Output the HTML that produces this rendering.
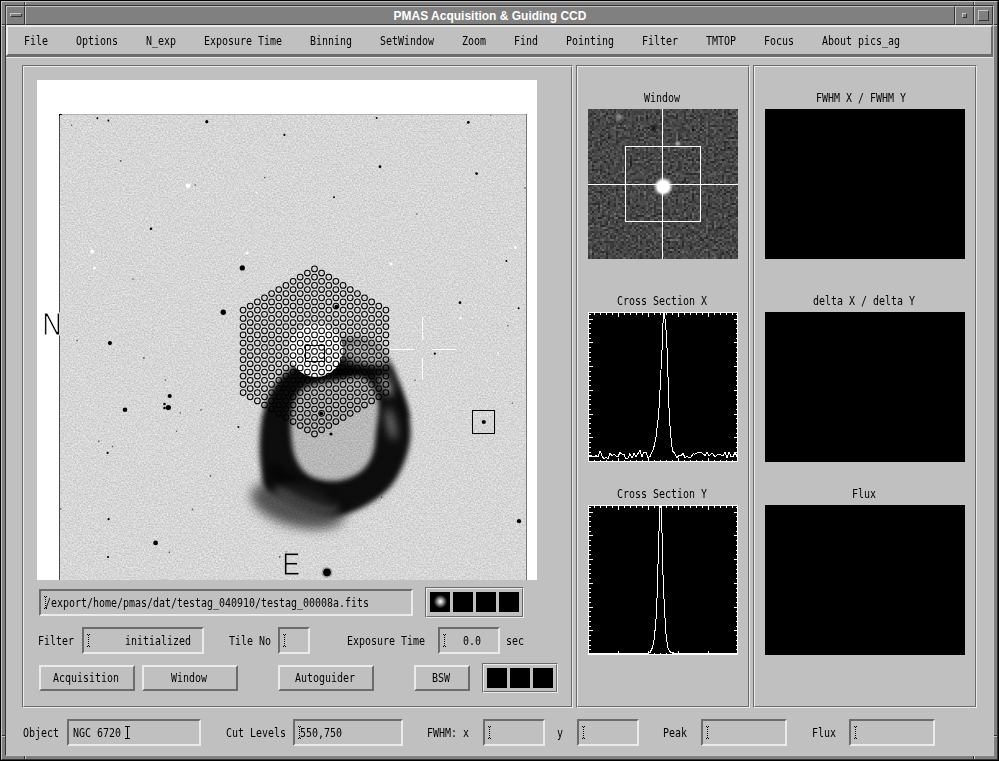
<!DOCTYPE html>
<html lang="en"><head><meta charset="utf-8"><title>PMAS Acquisition &amp; Guiding CCD</title>
<style>
html,body{margin:0;padding:0}
body{width:999px;height:761px;position:relative;overflow:hidden;background:#c0c0c0}
body>div,body>span,body>svg{position:absolute;box-sizing:content-box;display:block}
.t{font:12px/14px "DejaVu Sans Mono","Liberation Mono",monospace;white-space:pre;color:#000;
transform-origin:0 0;transform:scaleX(.8306)}
.title{font:bold 12px/19px "Liberation Sans",sans-serif;color:#fff;text-align:center;white-space:pre}
</style></head>
<body>
<div style="left:0px;top:0px;width:999px;height:761px;background:#000;"></div>
<div style="left:1px;top:1px;width:995px;height:757px;border:1px solid;border-color:#c6c6c6 #343434 #343434 #c6c6c6;background:#808080;"></div>
<div style="left:5px;top:5px;width:987px;height:749px;border:1px solid;border-color:#343434 #c6c6c6 #c6c6c6 #343434;background:#808080;"></div>
<div style="left:24px;top:2px;width:1px;height:3px;background:#343434;"></div>
<div style="left:25px;top:1px;width:1px;height:4px;background:#c6c6c6;"></div>
<div style="left:973px;top:2px;width:1px;height:3px;background:#343434;"></div>
<div style="left:974px;top:1px;width:1px;height:4px;background:#c6c6c6;"></div>
<div style="left:24px;top:756px;width:1px;height:3px;background:#343434;"></div>
<div style="left:25px;top:755px;width:1px;height:4px;background:#c6c6c6;"></div>
<div style="left:973px;top:756px;width:1px;height:3px;background:#343434;"></div>
<div style="left:974px;top:755px;width:1px;height:4px;background:#c6c6c6;"></div>
<div style="left:2px;top:24px;width:3px;height:1px;background:#343434;"></div>
<div style="left:1px;top:25px;width:4px;height:1px;background:#c6c6c6;"></div>
<div style="left:2px;top:735px;width:3px;height:1px;background:#343434;"></div>
<div style="left:1px;top:736px;width:4px;height:1px;background:#c6c6c6;"></div>
<div style="left:994px;top:24px;width:3px;height:1px;background:#343434;"></div>
<div style="left:993px;top:25px;width:4px;height:1px;background:#c6c6c6;"></div>
<div style="left:994px;top:735px;width:3px;height:1px;background:#343434;"></div>
<div style="left:993px;top:736px;width:4px;height:1px;background:#c6c6c6;"></div>
<div style="left:6px;top:6px;width:17px;height:17px;border:1px solid;border-color:#c6c6c6 #343434 #343434 #c6c6c6;background:#808080;"></div>
<div style="left:25px;top:6px;width:928px;height:17px;border:1px solid;border-color:#c6c6c6 #343434 #343434 #c6c6c6;background:#808080;"></div>
<div style="left:955px;top:6px;width:17px;height:17px;border:1px solid;border-color:#c6c6c6 #343434 #343434 #c6c6c6;background:#808080;"></div>
<div style="left:974px;top:6px;width:17px;height:17px;border:1px solid;border-color:#c6c6c6 #343434 #343434 #c6c6c6;background:#808080;"></div>
<div style="left:10px;top:13px;width:10px;height:2px;border:1px solid;border-color:#c6c6c6 #343434 #343434 #c6c6c6;background:#808080;"></div>
<div style="left:962px;top:13px;width:3px;height:3px;border:1px solid;border-color:#c6c6c6 #343434 #343434 #c6c6c6;background:#808080;"></div>
<div style="left:978px;top:10px;width:9px;height:9px;border:1px solid;border-color:#c6c6c6 #343434 #343434 #c6c6c6;background:#808080;"></div>
<span class="title" style="left:25px;top:7px;width:930px">PMAS Acquisition &amp; Guiding CCD</span>
<div style="left:6px;top:25px;width:987px;height:730px;background:#c0c0c0;"></div>
<div style="left:6px;top:25px;width:983px;height:27px;border:2px solid;border-color:#ebebeb #6c6c6c #6c6c6c #ebebeb;"></div>
<span class="t" style="left:24.0px;top:34px;">File</span>
<span class="t" style="left:76.0px;top:34px;">Options</span>
<span class="t" style="left:146.0px;top:34px;">N_exp</span>
<span class="t" style="left:204.0px;top:34px;">Exposure Time</span>
<span class="t" style="left:310.0px;top:34px;">Binning</span>
<span class="t" style="left:380.0px;top:34px;">SetWindow</span>
<span class="t" style="left:462.0px;top:34px;">Zoom</span>
<span class="t" style="left:514.0px;top:34px;">Find</span>
<span class="t" style="left:566.0px;top:34px;">Pointing</span>
<span class="t" style="left:642.0px;top:34px;">Filter</span>
<span class="t" style="left:706.0px;top:34px;">TMTOP</span>
<span class="t" style="left:764.0px;top:34px;">Focus</span>
<span class="t" style="left:822.0px;top:34px;">About pics_ag</span>
<div style="left:6px;top:56px;width:987px;height:1px;background:#6c6c6c;"></div>
<div style="left:6px;top:57px;width:987px;height:1px;background:#ebebeb;"></div>
<div style="left:22px;top:65px;width:549px;height:641px;border:1px solid;border-color:#6c6c6c #ebebeb #ebebeb #6c6c6c;"></div>
<div style="left:23px;top:66px;width:547px;height:639px;border:1px solid;border-color:#ebebeb #6c6c6c #6c6c6c #ebebeb;"></div>
<div style="left:576px;top:65px;width:172px;height:641px;border:1px solid;border-color:#6c6c6c #ebebeb #ebebeb #6c6c6c;"></div>
<div style="left:577px;top:66px;width:170px;height:639px;border:1px solid;border-color:#ebebeb #6c6c6c #6c6c6c #ebebeb;"></div>
<div style="left:753px;top:65px;width:222px;height:641px;border:1px solid;border-color:#6c6c6c #ebebeb #ebebeb #6c6c6c;"></div>
<div style="left:754px;top:66px;width:220px;height:639px;border:1px solid;border-color:#ebebeb #6c6c6c #6c6c6c #ebebeb;"></div>
<div style="left:37px;top:80px;width:500px;height:500px;background:#fff;"></div>
<svg style="left:37px;top:80px" width="500" height="500" viewBox="37 80 500 500">
<defs>
<clipPath id="cimg"><rect x="59" y="114" width="468" height="466"/></clipPath>
<filter id="noise" x="0" y="0" width="100%" height="100%" color-interpolation-filters="sRGB">
<feTurbulence type="fractalNoise" baseFrequency="0.61 0.67" numOctaves="2" seed="7" result="t"/>
<feColorMatrix in="t" type="matrix" values="0.28 0 0 0 0.70  0.28 0 0 0 0.70  0.28 0 0 0 0.70  0 0 0 0 1"/>
</filter>
<filter id="b6" x="-30%" y="-30%" width="160%" height="160%"><feGaussianBlur stdDeviation="6"/></filter>
<filter id="b3" x="-30%" y="-30%" width="160%" height="160%"><feGaussianBlur stdDeviation="2.6"/></filter>
<filter id="b4" x="-30%" y="-30%" width="160%" height="160%"><feGaussianBlur stdDeviation="4"/></filter>
<filter id="b2" x="-30%" y="-30%" width="160%" height="160%"><feGaussianBlur stdDeviation="2"/></filter>
<filter id="bs" x="-50%" y="-50%" width="200%" height="200%"><feGaussianBlur stdDeviation="0.45"/></filter>
</defs>
<g clip-path="url(#cimg)">
<rect x="59" y="114" width="468" height="466" fill="#d6d6d6" filter="url(#noise)"/>
<mask id="nm" maskUnits="userSpaceOnUse" x="240" y="330" width="200" height="220"><rect x="240" y="330" width="200" height="220" fill="#fff"/><g filter="url(#b4)" fill="#000"><ellipse cx="366" cy="353" rx="27" ry="13" opacity="0.84" transform="rotate(12 366 353)"/><ellipse cx="386" cy="384" rx="7" ry="12" opacity="0.7" transform="rotate(-25 386 384)"/><ellipse cx="305" cy="502" rx="34" ry="13" opacity="0.8" transform="rotate(18 305 502)"/><ellipse cx="391" cy="424" rx="4" ry="16" opacity="0.62" transform="rotate(-12 391 424)"/></g></mask><g filter="url(#b6)" fill="#000"><ellipse cx="334" cy="436" rx="72" ry="76" opacity="0.14"/><ellipse cx="298" cy="505" rx="48" ry="22" opacity="0.62" transform="rotate(14 298 505)"/></g><path d="M292 368C283.8 374.5 280.7 377.0 276 384C271.3 391.0 266.7 400.7 264 410C261.3 419.3 260.5 430.3 260 440C259.5 449.7 260.2 460.2 261 468C261.8 475.8 261.8 482.0 265 487C268.2 492.0 274.2 494.5 280 498C285.8 501.5 292.5 505.2 300 508C307.5 510.8 317.3 514.0 325 515C332.7 516.0 338.5 516.0 346 514C353.5 512.0 362.7 507.5 370 503C377.3 498.5 384.5 493.3 390 487C395.5 480.7 399.7 472.8 403 465C406.3 457.2 409.0 448.3 410 440C411.0 431.7 410.0 422.5 409 415C408.0 407.5 406.2 401.8 404 395C401.8 388.2 398.7 380.3 396 374C393.3 367.7 391.8 362.2 388 357C384.2 351.8 379.3 346.0 373 343C366.7 340.0 358.0 338.7 350 339C342.0 339.3 334.7 340.2 325 345C315.3 349.8 300.2 361.5 292 368ZM291 433C290.5 424.2 290.8 413.5 293 406C295.2 398.5 297.2 392.2 304 388C310.8 383.8 324.0 382.7 334 381C344.0 379.3 356.7 374.8 364 378C371.3 381.2 376.0 390.8 378 400C380.0 409.2 377.0 423.7 376 433C375.0 442.3 374.8 449.3 372 456C369.2 462.7 365.2 468.8 359 473C352.8 477.2 343.2 480.5 335 481C326.8 481.5 316.5 479.7 310 476C303.5 472.3 299.2 466.2 296 459C292.8 451.8 291.5 441.8 291 433Z" fill="#000" fill-rule="evenodd" filter="url(#b3)" opacity="0.93" mask="url(#nm)"/><g filter="url(#b3)" fill="none" stroke="#000" stroke-linecap="round"><path d="M390 378C397 390 403 402 407 416" stroke-width="5" opacity="0.5"/><path d="M340 372C352 369 368 368 383 372" stroke-width="7" opacity="0.8"/><path d="M274 470C290 486 310 494 330 499" stroke-width="14" opacity="0.5"/></g>
<g filter="url(#bs)">
<circle cx="206.8" cy="121.7" r="1.6" fill="#000"/>
<circle cx="284.4" cy="134.9" r="1.1" fill="#000"/>
<circle cx="120.8" cy="161" r="0.9" fill="#000" opacity="0.6"/>
<circle cx="195.3" cy="185" r="0.8" fill="#000" opacity="0.6"/>
<circle cx="151" cy="228.8" r="1.3" fill="#000"/>
<circle cx="242.3" cy="267.9" r="2.6" fill="#000"/>
<circle cx="223.3" cy="312.3" r="2.7" fill="#000"/>
<circle cx="133" cy="279" r="0.8" fill="#000" opacity="0.6"/>
<circle cx="264.7" cy="177.6" r="0.8" fill="#000" opacity="0.6"/>
<circle cx="376.7" cy="118.1" r="1.0" fill="#000"/>
<circle cx="468.3" cy="122.4" r="1.4" fill="#000"/>
<circle cx="490.7" cy="114.5" r="1.0" fill="#000"/>
<circle cx="380" cy="166.7" r="1.4" fill="#000"/>
<circle cx="476.6" cy="173.6" r="1.4" fill="#000"/>
<circle cx="334" cy="197.3" r="1.0" fill="#000"/>
<circle cx="416.8" cy="214" r="0.8" fill="#000" opacity="0.6"/>
<circle cx="460" cy="302.7" r="1.4" fill="#000"/>
<circle cx="506.4" cy="261" r="1.0" fill="#000"/>
<circle cx="518.6" cy="308.3" r="1.0" fill="#000"/>
<circle cx="336.3" cy="306.7" r="2.0" fill="#000"/>
<circle cx="525" cy="188" r="0.8" fill="#000" opacity="0.6"/>
<circle cx="507.8" cy="325.7" r="0.8" fill="#000" opacity="0.6"/>
<circle cx="109.9" cy="343.1" r="2.1" fill="#000"/>
<circle cx="77" cy="340.5" r="0.8" fill="#000" opacity="0.6"/>
<circle cx="143.8" cy="357.9" r="0.9" fill="#000" opacity="0.6"/>
<circle cx="169.7" cy="396" r="2.1" fill="#000"/>
<circle cx="168.4" cy="407.5" r="2.6" fill="#000"/>
<circle cx="164.5" cy="404" r="1.3" fill="#000"/>
<circle cx="164.5" cy="408" r="1.3" fill="#000"/>
<circle cx="125" cy="409.8" r="2.3" fill="#000"/>
<circle cx="180.2" cy="413.1" r="0.8" fill="#000" opacity="0.6"/>
<circle cx="201" cy="409.8" r="0.8" fill="#000" opacity="0.6"/>
<circle cx="176.6" cy="431.2" r="0.8" fill="#000" opacity="0.6"/>
<circle cx="238.4" cy="426.9" r="1.0" fill="#000"/>
<circle cx="107.6" cy="452.9" r="1.1" fill="#000"/>
<circle cx="98.8" cy="441.4" r="0.8" fill="#000" opacity="0.6"/>
<circle cx="112.6" cy="446.6" r="0.8" fill="#000" opacity="0.6"/>
<circle cx="210.5" cy="475.9" r="0.8" fill="#000" opacity="0.6"/>
<circle cx="108.6" cy="519.2" r="1.1" fill="#000"/>
<circle cx="155.6" cy="542.9" r="2.4" fill="#000"/>
<circle cx="108" cy="557" r="1.1" fill="#000"/>
<circle cx="169.4" cy="552.4" r="0.8" fill="#000" opacity="0.6"/>
<circle cx="60.7" cy="509" r="0.8" fill="#000" opacity="0.6"/>
<circle cx="165.4" cy="380" r="0.8" fill="#000" opacity="0.6"/>
<circle cx="192.4" cy="509.4" r="0.8" fill="#000" opacity="0.6"/>
<circle cx="483.8" cy="422" r="2.1" fill="#000"/>
<circle cx="519" cy="521.2" r="2.1" fill="#000"/>
<circle cx="327" cy="572.4" r="3.8" fill="#000"/>
<circle cx="434.8" cy="353.7" r="1.1" fill="#000"/>
<circle cx="415" cy="380.3" r="0.8" fill="#000" opacity="0.6"/>
<circle cx="512.4" cy="403.3" r="0.8" fill="#000" opacity="0.6"/>
<circle cx="331" cy="434" r="1.6" fill="#000"/>
<circle cx="321.2" cy="413.4" r="2.0" fill="#000"/>
<circle cx="381.6" cy="497.2" r="0.8" fill="#000" opacity="0.6"/>
<circle cx="97.4" cy="118.3" r="1.0" fill="#000"/>
<circle cx="108.4" cy="120.6" r="1.0" fill="#000"/>
<circle cx="71.6" cy="125.3" r="0.8" fill="#000" opacity="0.6"/>
<circle cx="279.7" cy="556.8" r="0.9" fill="#000" opacity="0.6"/>
<circle cx="286" cy="552" r="0.8" fill="#000" opacity="0.6"/>
<circle cx="188" cy="185.8" r="2.4" fill="#fff"/>
<circle cx="92.2" cy="251.5" r="2.0" fill="#fff"/>
<circle cx="94.5" cy="268" r="1.5" fill="#fff"/>
<circle cx="247" cy="253" r="1.5" fill="#fff"/>
<circle cx="256.4" cy="192.4" r="1.0" fill="#fff"/>
<circle cx="515.3" cy="247.5" r="1.5" fill="#fff"/>
<circle cx="391" cy="264" r="1.6" fill="#fff"/>
<circle cx="460.5" cy="318" r="1.2" fill="#fff"/>
<circle cx="498" cy="353" r="0.9" fill="#fff"/>
</g>
<circle cx="327" cy="572.4" r="5.5" fill="#000" opacity="0.25" filter="url(#bs)"/>
<circle cx="316" cy="350" r="27" fill="#fff"/>
<path d="M59.5 114v466" stroke="#484848" stroke-width="1" fill="none"/><path d="M59 114.5h468" stroke="#b2b2b2" stroke-width="1" fill="none"/><path d="M526.5 114v466" stroke="#777" stroke-width="1" fill="none"/><path d="M59 114h3v1h-2v1h-1z" fill="#000"/>
</g>
<g fill="none" stroke="#000" stroke-width="1.05"><circle cx="243.1" cy="310.1" r="2.85"/><circle cx="243.1" cy="318.4" r="2.85"/><circle cx="243.1" cy="326.6" r="2.85"/><circle cx="243.1" cy="334.9" r="2.85"/><circle cx="243.1" cy="343.1" r="2.85"/><circle cx="243.1" cy="351.4" r="2.85"/><circle cx="243.1" cy="359.6" r="2.85"/><circle cx="243.1" cy="367.9" r="2.85"/><circle cx="243.1" cy="376.1" r="2.85"/><circle cx="243.1" cy="384.4" r="2.85"/><circle cx="243.1" cy="392.6" r="2.85"/><circle cx="250.2" cy="306.0" r="2.85"/><circle cx="250.2" cy="314.3" r="2.85"/><circle cx="250.2" cy="322.5" r="2.85"/><circle cx="250.2" cy="330.8" r="2.85"/><circle cx="250.2" cy="339.0" r="2.85"/><circle cx="250.2" cy="347.3" r="2.85"/><circle cx="250.2" cy="355.5" r="2.85"/><circle cx="250.2" cy="363.8" r="2.85"/><circle cx="250.2" cy="372.0" r="2.85"/><circle cx="250.2" cy="380.3" r="2.85"/><circle cx="250.2" cy="388.5" r="2.85"/><circle cx="250.2" cy="396.8" r="2.85"/><circle cx="257.4" cy="301.9" r="2.85"/><circle cx="257.4" cy="310.1" r="2.85"/><circle cx="257.4" cy="318.4" r="2.85"/><circle cx="257.4" cy="326.6" r="2.85"/><circle cx="257.4" cy="334.9" r="2.85"/><circle cx="257.4" cy="343.1" r="2.85"/><circle cx="257.4" cy="351.4" r="2.85"/><circle cx="257.4" cy="359.6" r="2.85"/><circle cx="257.4" cy="367.9" r="2.85"/><circle cx="257.4" cy="376.1" r="2.85"/><circle cx="257.4" cy="384.4" r="2.85"/><circle cx="257.4" cy="392.6" r="2.85"/><circle cx="257.4" cy="400.9" r="2.85"/><circle cx="264.5" cy="297.8" r="2.85"/><circle cx="264.5" cy="306.0" r="2.85"/><circle cx="264.5" cy="314.3" r="2.85"/><circle cx="264.5" cy="322.5" r="2.85"/><circle cx="264.5" cy="330.8" r="2.85"/><circle cx="264.5" cy="339.0" r="2.85"/><circle cx="264.5" cy="347.3" r="2.85"/><circle cx="264.5" cy="355.5" r="2.85"/><circle cx="264.5" cy="363.8" r="2.85"/><circle cx="264.5" cy="372.0" r="2.85"/><circle cx="264.5" cy="380.3" r="2.85"/><circle cx="264.5" cy="388.5" r="2.85"/><circle cx="264.5" cy="396.8" r="2.85"/><circle cx="264.5" cy="405.0" r="2.85"/><circle cx="271.6" cy="293.6" r="2.85"/><circle cx="271.6" cy="301.9" r="2.85"/><circle cx="271.6" cy="310.1" r="2.85"/><circle cx="271.6" cy="318.4" r="2.85"/><circle cx="271.6" cy="326.6" r="2.85"/><circle cx="271.6" cy="334.9" r="2.85"/><circle cx="271.6" cy="343.1" r="2.85"/><circle cx="271.6" cy="351.4" r="2.85"/><circle cx="271.6" cy="359.6" r="2.85"/><circle cx="271.6" cy="367.9" r="2.85"/><circle cx="271.6" cy="376.1" r="2.85"/><circle cx="271.6" cy="384.4" r="2.85"/><circle cx="271.6" cy="392.6" r="2.85"/><circle cx="271.6" cy="400.9" r="2.85"/><circle cx="271.6" cy="409.1" r="2.85"/><circle cx="278.8" cy="289.5" r="2.85"/><circle cx="278.8" cy="297.8" r="2.85"/><circle cx="278.8" cy="306.0" r="2.85"/><circle cx="278.8" cy="314.3" r="2.85"/><circle cx="278.8" cy="322.5" r="2.85"/><circle cx="278.8" cy="330.8" r="2.85"/><circle cx="278.8" cy="339.0" r="2.85"/><circle cx="278.8" cy="347.3" r="2.85"/><circle cx="278.8" cy="355.5" r="2.85"/><circle cx="278.8" cy="363.8" r="2.85"/><circle cx="278.8" cy="372.0" r="2.85"/><circle cx="278.8" cy="380.3" r="2.85"/><circle cx="278.8" cy="388.5" r="2.85"/><circle cx="278.8" cy="396.8" r="2.85"/><circle cx="278.8" cy="405.0" r="2.85"/><circle cx="278.8" cy="413.3" r="2.85"/><circle cx="285.9" cy="285.4" r="2.85"/><circle cx="285.9" cy="293.6" r="2.85"/><circle cx="285.9" cy="301.9" r="2.85"/><circle cx="285.9" cy="310.1" r="2.85"/><circle cx="285.9" cy="318.4" r="2.85"/><circle cx="285.9" cy="326.6" r="2.85"/><circle cx="285.9" cy="334.9" r="2.85"/><circle cx="285.9" cy="343.1" r="2.85"/><circle cx="285.9" cy="351.4" r="2.85"/><circle cx="285.9" cy="359.6" r="2.85"/><circle cx="285.9" cy="367.9" r="2.85"/><circle cx="285.9" cy="376.1" r="2.85"/><circle cx="285.9" cy="384.4" r="2.85"/><circle cx="285.9" cy="392.6" r="2.85"/><circle cx="285.9" cy="400.9" r="2.85"/><circle cx="285.9" cy="409.1" r="2.85"/><circle cx="285.9" cy="417.4" r="2.85"/><circle cx="293.1" cy="281.3" r="2.85"/><circle cx="293.1" cy="289.5" r="2.85"/><circle cx="293.1" cy="297.8" r="2.85"/><circle cx="293.1" cy="306.0" r="2.85"/><circle cx="293.1" cy="314.3" r="2.85"/><circle cx="293.1" cy="322.5" r="2.85"/><circle cx="293.1" cy="330.8" r="2.85"/><circle cx="293.1" cy="339.0" r="2.85"/><circle cx="293.1" cy="347.3" r="2.85"/><circle cx="293.1" cy="355.5" r="2.85"/><circle cx="293.1" cy="363.8" r="2.85"/><circle cx="293.1" cy="372.0" r="2.85"/><circle cx="293.1" cy="380.3" r="2.85"/><circle cx="293.1" cy="388.5" r="2.85"/><circle cx="293.1" cy="396.8" r="2.85"/><circle cx="293.1" cy="405.0" r="2.85"/><circle cx="293.1" cy="413.3" r="2.85"/><circle cx="293.1" cy="421.5" r="2.85"/><circle cx="300.2" cy="277.1" r="2.85"/><circle cx="300.2" cy="285.4" r="2.85"/><circle cx="300.2" cy="293.6" r="2.85"/><circle cx="300.2" cy="301.9" r="2.85"/><circle cx="300.2" cy="310.1" r="2.85"/><circle cx="300.2" cy="318.4" r="2.85"/><circle cx="300.2" cy="326.6" r="2.85"/><circle cx="300.2" cy="334.9" r="2.85"/><circle cx="300.2" cy="343.1" r="2.85"/><circle cx="300.2" cy="351.4" r="2.85"/><circle cx="300.2" cy="359.6" r="2.85"/><circle cx="300.2" cy="367.9" r="2.85"/><circle cx="300.2" cy="376.1" r="2.85"/><circle cx="300.2" cy="384.4" r="2.85"/><circle cx="300.2" cy="392.6" r="2.85"/><circle cx="300.2" cy="400.9" r="2.85"/><circle cx="300.2" cy="409.1" r="2.85"/><circle cx="300.2" cy="417.4" r="2.85"/><circle cx="300.2" cy="425.6" r="2.85"/><circle cx="307.4" cy="273.0" r="2.85"/><circle cx="307.4" cy="281.3" r="2.85"/><circle cx="307.4" cy="289.5" r="2.85"/><circle cx="307.4" cy="297.8" r="2.85"/><circle cx="307.4" cy="306.0" r="2.85"/><circle cx="307.4" cy="314.3" r="2.85"/><circle cx="307.4" cy="322.5" r="2.85"/><circle cx="307.4" cy="330.8" r="2.85"/><circle cx="307.4" cy="339.0" r="2.85"/><circle cx="307.4" cy="347.3" r="2.85"/><circle cx="307.4" cy="355.5" r="2.85"/><circle cx="307.4" cy="363.8" r="2.85"/><circle cx="307.4" cy="372.0" r="2.85"/><circle cx="307.4" cy="380.3" r="2.85"/><circle cx="307.4" cy="388.5" r="2.85"/><circle cx="307.4" cy="396.8" r="2.85"/><circle cx="307.4" cy="405.0" r="2.85"/><circle cx="307.4" cy="413.3" r="2.85"/><circle cx="307.4" cy="421.5" r="2.85"/><circle cx="307.4" cy="429.8" r="2.85"/><circle cx="314.5" cy="268.9" r="2.85"/><circle cx="314.5" cy="277.1" r="2.85"/><circle cx="314.5" cy="285.4" r="2.85"/><circle cx="314.5" cy="293.6" r="2.85"/><circle cx="314.5" cy="301.9" r="2.85"/><circle cx="314.5" cy="310.1" r="2.85"/><circle cx="314.5" cy="318.4" r="2.85"/><circle cx="314.5" cy="326.6" r="2.85"/><circle cx="314.5" cy="334.9" r="2.85"/><circle cx="314.5" cy="343.1" r="2.85"/><circle cx="314.5" cy="351.4" r="2.85"/><circle cx="314.5" cy="359.6" r="2.85"/><circle cx="314.5" cy="367.9" r="2.85"/><circle cx="314.5" cy="376.1" r="2.85"/><circle cx="314.5" cy="384.4" r="2.85"/><circle cx="314.5" cy="392.6" r="2.85"/><circle cx="314.5" cy="400.9" r="2.85"/><circle cx="314.5" cy="409.1" r="2.85"/><circle cx="314.5" cy="417.4" r="2.85"/><circle cx="314.5" cy="425.6" r="2.85"/><circle cx="314.5" cy="433.9" r="2.85"/><circle cx="321.6" cy="273.0" r="2.85"/><circle cx="321.6" cy="281.3" r="2.85"/><circle cx="321.6" cy="289.5" r="2.85"/><circle cx="321.6" cy="297.8" r="2.85"/><circle cx="321.6" cy="306.0" r="2.85"/><circle cx="321.6" cy="314.3" r="2.85"/><circle cx="321.6" cy="322.5" r="2.85"/><circle cx="321.6" cy="330.8" r="2.85"/><circle cx="321.6" cy="339.0" r="2.85"/><circle cx="321.6" cy="347.3" r="2.85"/><circle cx="321.6" cy="355.5" r="2.85"/><circle cx="321.6" cy="363.8" r="2.85"/><circle cx="321.6" cy="372.0" r="2.85"/><circle cx="321.6" cy="380.3" r="2.85"/><circle cx="321.6" cy="388.5" r="2.85"/><circle cx="321.6" cy="396.8" r="2.85"/><circle cx="321.6" cy="405.0" r="2.85"/><circle cx="321.6" cy="413.3" r="2.85"/><circle cx="321.6" cy="421.5" r="2.85"/><circle cx="321.6" cy="429.8" r="2.85"/><circle cx="328.8" cy="277.1" r="2.85"/><circle cx="328.8" cy="285.4" r="2.85"/><circle cx="328.8" cy="293.6" r="2.85"/><circle cx="328.8" cy="301.9" r="2.85"/><circle cx="328.8" cy="310.1" r="2.85"/><circle cx="328.8" cy="318.4" r="2.85"/><circle cx="328.8" cy="326.6" r="2.85"/><circle cx="328.8" cy="334.9" r="2.85"/><circle cx="328.8" cy="343.1" r="2.85"/><circle cx="328.8" cy="351.4" r="2.85"/><circle cx="328.8" cy="359.6" r="2.85"/><circle cx="328.8" cy="367.9" r="2.85"/><circle cx="328.8" cy="376.1" r="2.85"/><circle cx="328.8" cy="384.4" r="2.85"/><circle cx="328.8" cy="392.6" r="2.85"/><circle cx="328.8" cy="400.9" r="2.85"/><circle cx="328.8" cy="409.1" r="2.85"/><circle cx="328.8" cy="417.4" r="2.85"/><circle cx="328.8" cy="425.6" r="2.85"/><circle cx="335.9" cy="281.3" r="2.85"/><circle cx="335.9" cy="289.5" r="2.85"/><circle cx="335.9" cy="297.8" r="2.85"/><circle cx="335.9" cy="306.0" r="2.85"/><circle cx="335.9" cy="314.3" r="2.85"/><circle cx="335.9" cy="322.5" r="2.85"/><circle cx="335.9" cy="330.8" r="2.85"/><circle cx="335.9" cy="339.0" r="2.85"/><circle cx="335.9" cy="347.3" r="2.85"/><circle cx="335.9" cy="355.5" r="2.85"/><circle cx="335.9" cy="363.8" r="2.85"/><circle cx="335.9" cy="372.0" r="2.85"/><circle cx="335.9" cy="380.3" r="2.85"/><circle cx="335.9" cy="388.5" r="2.85"/><circle cx="335.9" cy="396.8" r="2.85"/><circle cx="335.9" cy="405.0" r="2.85"/><circle cx="335.9" cy="413.3" r="2.85"/><circle cx="335.9" cy="421.5" r="2.85"/><circle cx="343.1" cy="285.4" r="2.85"/><circle cx="343.1" cy="293.6" r="2.85"/><circle cx="343.1" cy="301.9" r="2.85"/><circle cx="343.1" cy="310.1" r="2.85"/><circle cx="343.1" cy="318.4" r="2.85"/><circle cx="343.1" cy="326.6" r="2.85"/><circle cx="343.1" cy="334.9" r="2.85"/><circle cx="343.1" cy="343.1" r="2.85"/><circle cx="343.1" cy="351.4" r="2.85"/><circle cx="343.1" cy="359.6" r="2.85"/><circle cx="343.1" cy="367.9" r="2.85"/><circle cx="343.1" cy="376.1" r="2.85"/><circle cx="343.1" cy="384.4" r="2.85"/><circle cx="343.1" cy="392.6" r="2.85"/><circle cx="343.1" cy="400.9" r="2.85"/><circle cx="343.1" cy="409.1" r="2.85"/><circle cx="343.1" cy="417.4" r="2.85"/><circle cx="350.2" cy="289.5" r="2.85"/><circle cx="350.2" cy="297.8" r="2.85"/><circle cx="350.2" cy="306.0" r="2.85"/><circle cx="350.2" cy="314.3" r="2.85"/><circle cx="350.2" cy="322.5" r="2.85"/><circle cx="350.2" cy="330.8" r="2.85"/><circle cx="350.2" cy="339.0" r="2.85"/><circle cx="350.2" cy="347.3" r="2.85"/><circle cx="350.2" cy="355.5" r="2.85"/><circle cx="350.2" cy="363.8" r="2.85"/><circle cx="350.2" cy="372.0" r="2.85"/><circle cx="350.2" cy="380.3" r="2.85"/><circle cx="350.2" cy="388.5" r="2.85"/><circle cx="350.2" cy="396.8" r="2.85"/><circle cx="350.2" cy="405.0" r="2.85"/><circle cx="350.2" cy="413.3" r="2.85"/><circle cx="357.4" cy="293.6" r="2.85"/><circle cx="357.4" cy="301.9" r="2.85"/><circle cx="357.4" cy="310.1" r="2.85"/><circle cx="357.4" cy="318.4" r="2.85"/><circle cx="357.4" cy="326.6" r="2.85"/><circle cx="357.4" cy="334.9" r="2.85"/><circle cx="357.4" cy="343.1" r="2.85"/><circle cx="357.4" cy="351.4" r="2.85"/><circle cx="357.4" cy="359.6" r="2.85"/><circle cx="357.4" cy="367.9" r="2.85"/><circle cx="357.4" cy="376.1" r="2.85"/><circle cx="357.4" cy="384.4" r="2.85"/><circle cx="357.4" cy="392.6" r="2.85"/><circle cx="357.4" cy="400.9" r="2.85"/><circle cx="357.4" cy="409.1" r="2.85"/><circle cx="364.5" cy="297.8" r="2.85"/><circle cx="364.5" cy="306.0" r="2.85"/><circle cx="364.5" cy="314.3" r="2.85"/><circle cx="364.5" cy="322.5" r="2.85"/><circle cx="364.5" cy="330.8" r="2.85"/><circle cx="364.5" cy="339.0" r="2.85"/><circle cx="364.5" cy="347.3" r="2.85"/><circle cx="364.5" cy="355.5" r="2.85"/><circle cx="364.5" cy="363.8" r="2.85"/><circle cx="364.5" cy="372.0" r="2.85"/><circle cx="364.5" cy="380.3" r="2.85"/><circle cx="364.5" cy="388.5" r="2.85"/><circle cx="364.5" cy="396.8" r="2.85"/><circle cx="364.5" cy="405.0" r="2.85"/><circle cx="371.6" cy="301.9" r="2.85"/><circle cx="371.6" cy="310.1" r="2.85"/><circle cx="371.6" cy="318.4" r="2.85"/><circle cx="371.6" cy="326.6" r="2.85"/><circle cx="371.6" cy="334.9" r="2.85"/><circle cx="371.6" cy="343.1" r="2.85"/><circle cx="371.6" cy="351.4" r="2.85"/><circle cx="371.6" cy="359.6" r="2.85"/><circle cx="371.6" cy="367.9" r="2.85"/><circle cx="371.6" cy="376.1" r="2.85"/><circle cx="371.6" cy="384.4" r="2.85"/><circle cx="371.6" cy="392.6" r="2.85"/><circle cx="371.6" cy="400.9" r="2.85"/><circle cx="378.8" cy="306.0" r="2.85"/><circle cx="378.8" cy="314.3" r="2.85"/><circle cx="378.8" cy="322.5" r="2.85"/><circle cx="378.8" cy="330.8" r="2.85"/><circle cx="378.8" cy="339.0" r="2.85"/><circle cx="378.8" cy="347.3" r="2.85"/><circle cx="378.8" cy="355.5" r="2.85"/><circle cx="378.8" cy="363.8" r="2.85"/><circle cx="378.8" cy="372.0" r="2.85"/><circle cx="378.8" cy="380.3" r="2.85"/><circle cx="378.8" cy="388.5" r="2.85"/><circle cx="378.8" cy="396.8" r="2.85"/><circle cx="385.9" cy="310.1" r="2.85"/><circle cx="385.9" cy="318.4" r="2.85"/><circle cx="385.9" cy="326.6" r="2.85"/><circle cx="385.9" cy="334.9" r="2.85"/><circle cx="385.9" cy="343.1" r="2.85"/><circle cx="385.9" cy="351.4" r="2.85"/><circle cx="385.9" cy="359.6" r="2.85"/><circle cx="385.9" cy="367.9" r="2.85"/><circle cx="385.9" cy="376.1" r="2.85"/><circle cx="385.9" cy="384.4" r="2.85"/><circle cx="385.9" cy="392.6" r="2.85"/></g>
<g fill="none" stroke="#000" stroke-width="1" shape-rendering="crispEdges"><rect x="305.5" y="345.5" width="19" height="16"/><rect x="472.5" y="410.5" width="22" height="23"/></g>
<path d="M390 349.5h23.5M431.5 349.5h24M422.5 317v23M422.5 358v21.5" stroke="#fff" stroke-width="1" fill="none" shape-rendering="crispEdges"/>
<g font-family="Liberation Sans, sans-serif" font-size="31.4" fill="#000"><text x="42.6" y="335.4" transform="translate(42.6 0) scale(0.84 1) translate(-42.6 0)" stroke="#fff" stroke-width="0.9">N</text><text x="282.3" y="575.4" transform="translate(282.3 0) scale(0.85 1) translate(-282.3 0)" stroke="#d8d8d8" stroke-width="0.9">E</text></g>
</svg>
<div style="left:39px;top:589px;width:370px;height:23px;border:2px solid;border-color:#6c6c6c #ebebeb #ebebeb #6c6c6c;"></div>
<svg style="left:44px;top:596px" width="3" height="13" viewBox="0 0 3 13" shape-rendering="crispEdges"><path d="M0 0h1v1h-1zM2 0h1v1h-1zM1 1h1v1h-1zM1 3h1v1h-1zM1 5h1v1h-1zM1 7h1v1h-1zM1 9h1v1h-1zM1 11h1v1h-1zM0 12h1v1h-1zM2 12h1v1h-1z" fill="#000"/></svg>
<span class="t" style="left:45.0px;top:596px;">/export/home/pmas/dat/testag_040910/testag_00008a.fits</span>
<div style="left:425px;top:587px;width:97px;height:29px;border:1px solid;border-color:#6c6c6c #ebebeb #ebebeb #6c6c6c;"></div>
<div style="left:426px;top:588px;width:95px;height:27px;border:1px solid;border-color:#ebebeb #6c6c6c #6c6c6c #ebebeb;"></div>
<div style="left:430px;top:592px;width:20px;height:20px;background:#000;background-image:radial-gradient(circle at 10.4px 9.5px,#fff 0,#e0e0e0 1px,#a8a8a8 2.5px,#6a6a6a 4px,#2c2c2c 5.5px,#000 6.8px);"></div>
<div style="left:453px;top:592px;width:20px;height:20px;background:#000;"></div>
<div style="left:476px;top:592px;width:20px;height:20px;background:#000;"></div>
<div style="left:499px;top:592px;width:20px;height:20px;background:#000;"></div>
<span class="t" style="left:38.0px;top:634px;">Filter</span>
<div style="left:82px;top:627px;width:118px;height:23px;border:2px solid;border-color:#6c6c6c #ebebeb #ebebeb #6c6c6c;"></div>
<svg style="left:87px;top:634px" width="3" height="13" viewBox="0 0 3 13" shape-rendering="crispEdges"><path d="M0 0h1v1h-1zM2 0h1v1h-1zM1 1h1v1h-1zM1 3h1v1h-1zM1 5h1v1h-1zM1 7h1v1h-1zM1 9h1v1h-1zM1 11h1v1h-1zM0 12h1v1h-1zM2 12h1v1h-1z" fill="#000"/></svg>
<span class="t" style="left:125.0px;top:634px;">initialized</span>
<span class="t" style="left:228.5px;top:634px;">Tile No</span>
<div style="left:278px;top:627px;width:28px;height:23px;border:2px solid;border-color:#6c6c6c #ebebeb #ebebeb #6c6c6c;"></div>
<svg style="left:283px;top:634px" width="3" height="13" viewBox="0 0 3 13" shape-rendering="crispEdges"><path d="M0 0h1v1h-1zM2 0h1v1h-1zM1 1h1v1h-1zM1 3h1v1h-1zM1 5h1v1h-1zM1 7h1v1h-1zM1 9h1v1h-1zM1 11h1v1h-1zM0 12h1v1h-1zM2 12h1v1h-1z" fill="#000"/></svg>
<span class="t" style="left:346.5px;top:634px;">Exposure Time</span>
<div style="left:438px;top:627px;width:58px;height:23px;border:2px solid;border-color:#6c6c6c #ebebeb #ebebeb #6c6c6c;"></div>
<svg style="left:443px;top:634px" width="3" height="13" viewBox="0 0 3 13" shape-rendering="crispEdges"><path d="M0 0h1v1h-1zM2 0h1v1h-1zM1 1h1v1h-1zM1 3h1v1h-1zM1 5h1v1h-1zM1 7h1v1h-1zM1 9h1v1h-1zM1 11h1v1h-1zM0 12h1v1h-1zM2 12h1v1h-1z" fill="#000"/></svg>
<span class="t" style="left:462.5px;top:634px;">0.0</span>
<span class="t" style="left:506.0px;top:634px;">sec</span>
<div style="left:39px;top:665px;width:92px;height:22px;border:2px solid;border-color:#ebebeb #6c6c6c #6c6c6c #ebebeb;"></div>
<span class="t" style="left:53.0px;top:671px;">Acquisition</span>
<div style="left:142px;top:665px;width:92px;height:22px;border:2px solid;border-color:#ebebeb #6c6c6c #6c6c6c #ebebeb;"></div>
<span class="t" style="left:171.0px;top:671px;">Window</span>
<div style="left:278px;top:665px;width:92px;height:22px;border:2px solid;border-color:#ebebeb #6c6c6c #6c6c6c #ebebeb;"></div>
<span class="t" style="left:295.0px;top:671px;">Autoguider</span>
<div style="left:414px;top:665px;width:52px;height:22px;border:2px solid;border-color:#ebebeb #6c6c6c #6c6c6c #ebebeb;"></div>
<span class="t" style="left:432.0px;top:671px;">BSW</span>
<div style="left:482px;top:663px;width:74px;height:28px;border:1px solid;border-color:#6c6c6c #ebebeb #ebebeb #6c6c6c;"></div>
<div style="left:483px;top:664px;width:72px;height:26px;border:1px solid;border-color:#ebebeb #6c6c6c #6c6c6c #ebebeb;"></div>
<div style="left:487px;top:668px;width:20px;height:20px;background:#000;"></div>
<div style="left:510px;top:668px;width:20px;height:20px;background:#000;"></div>
<div style="left:533px;top:668px;width:20px;height:20px;background:#000;"></div>
<span class="t" style="left:23.0px;top:726px;">Object</span>
<div style="left:67px;top:719px;width:130px;height:23px;border:2px solid;border-color:#6c6c6c #ebebeb #ebebeb #6c6c6c;"></div>
<span class="t" style="left:73.0px;top:726px;">NGC 6720</span>
<svg style="left:125px;top:726px" width="5" height="13" viewBox="0 0 5 13" shape-rendering="crispEdges"><path d="M0 0.5h5M0 12.5h5M2.5 0v13" stroke="#000" stroke-width="1" fill="none"/></svg>
<span class="t" style="left:225.5px;top:726px;">Cut Levels</span>
<div style="left:293px;top:719px;width:106px;height:23px;border:2px solid;border-color:#6c6c6c #ebebeb #ebebeb #6c6c6c;"></div>
<svg style="left:298px;top:726px" width="3" height="13" viewBox="0 0 3 13" shape-rendering="crispEdges"><path d="M0 0h1v1h-1zM2 0h1v1h-1zM1 1h1v1h-1zM1 3h1v1h-1zM1 5h1v1h-1zM1 7h1v1h-1zM1 9h1v1h-1zM1 11h1v1h-1zM0 12h1v1h-1zM2 12h1v1h-1z" fill="#000"/></svg>
<span class="t" style="left:299.5px;top:726px;">550,750</span>
<span class="t" style="left:427.0px;top:726px;">FWHM: x</span>
<div style="left:483px;top:719px;width:58px;height:23px;border:2px solid;border-color:#6c6c6c #ebebeb #ebebeb #6c6c6c;"></div>
<svg style="left:488px;top:726px" width="3" height="13" viewBox="0 0 3 13" shape-rendering="crispEdges"><path d="M0 0h1v1h-1zM2 0h1v1h-1zM1 1h1v1h-1zM1 3h1v1h-1zM1 5h1v1h-1zM1 7h1v1h-1zM1 9h1v1h-1zM1 11h1v1h-1zM0 12h1v1h-1zM2 12h1v1h-1z" fill="#000"/></svg>
<span class="t" style="left:557.0px;top:726px;">y</span>
<div style="left:577px;top:719px;width:58px;height:23px;border:2px solid;border-color:#6c6c6c #ebebeb #ebebeb #6c6c6c;"></div>
<svg style="left:582px;top:726px" width="3" height="13" viewBox="0 0 3 13" shape-rendering="crispEdges"><path d="M0 0h1v1h-1zM2 0h1v1h-1zM1 1h1v1h-1zM1 3h1v1h-1zM1 5h1v1h-1zM1 7h1v1h-1zM1 9h1v1h-1zM1 11h1v1h-1zM0 12h1v1h-1zM2 12h1v1h-1z" fill="#000"/></svg>
<span class="t" style="left:663.0px;top:726px;">Peak</span>
<div style="left:701px;top:719px;width:82px;height:23px;border:2px solid;border-color:#6c6c6c #ebebeb #ebebeb #6c6c6c;"></div>
<svg style="left:706px;top:726px" width="3" height="13" viewBox="0 0 3 13" shape-rendering="crispEdges"><path d="M0 0h1v1h-1zM2 0h1v1h-1zM1 1h1v1h-1zM1 3h1v1h-1zM1 5h1v1h-1zM1 7h1v1h-1zM1 9h1v1h-1zM1 11h1v1h-1zM0 12h1v1h-1zM2 12h1v1h-1z" fill="#000"/></svg>
<span class="t" style="left:811.5px;top:726px;">Flux</span>
<div style="left:849px;top:719px;width:82px;height:23px;border:2px solid;border-color:#6c6c6c #ebebeb #ebebeb #6c6c6c;"></div>
<svg style="left:854px;top:726px" width="3" height="13" viewBox="0 0 3 13" shape-rendering="crispEdges"><path d="M0 0h1v1h-1zM2 0h1v1h-1zM1 1h1v1h-1zM1 3h1v1h-1zM1 5h1v1h-1zM1 7h1v1h-1zM1 9h1v1h-1zM1 11h1v1h-1zM0 12h1v1h-1zM2 12h1v1h-1z" fill="#000"/></svg>
<span class="t" style="left:644.0px;top:91px;">Window</span>
<svg style="left:588px;top:109px" width="150" height="150" viewBox="588 109 150 150">
<defs>
<filter id="wnoise" x="588" y="109" width="150" height="150" filterUnits="userSpaceOnUse" color-interpolation-filters="sRGB">
<feTurbulence type="fractalNoise" baseFrequency="0.37 0.41" numOctaves="2" seed="11" result="t"/>
<feColorMatrix in="t" type="matrix" values="0.5 0 0 0 0.025  0.5 0 0 0 0.025  0.5 0 0 0 0.025  0 0 0 0 1" result="n"/>
<feFlood x="588" y="109" width="1" height="1" flood-color="#000" result="dot"/>
<feOffset in="dot" dx="0" dy="0" x="588" y="109" width="2" height="2" result="cell"/>
<feTile in="cell" x="588" y="109" width="150" height="150" result="grid"/>
<feComposite in="n" in2="grid" operator="in" result="s0"/>
<feOffset in="s0" dx="1" dy="0" result="s1"/>
<feOffset in="s0" dx="0" dy="1" result="s2"/>
<feOffset in="s0" dx="1" dy="1" result="s3"/>
<feMerge><feMergeNode in="s0"/><feMergeNode in="s1"/><feMergeNode in="s2"/><feMergeNode in="s3"/></feMerge>
</filter>
<filter id="wb" x="-50%" y="-50%" width="200%" height="200%"><feGaussianBlur stdDeviation="1.6"/></filter>
<filter id="wb2" x="-50%" y="-50%" width="200%" height="200%"><feGaussianBlur stdDeviation="1.2"/></filter>
</defs>
<rect x="588" y="109" width="150" height="150" fill="#424242" filter="url(#wnoise)"/>
<circle cx="663.3" cy="186.7" r="8" fill="#fff" filter="url(#wb)"/>
<circle cx="663.3" cy="186.7" r="6" fill="#fff"/>
<circle cx="677.6" cy="143.6" r="2.2" fill="#bbb" filter="url(#wb2)"/>
<circle cx="619" cy="117" r="3" fill="#8a8a8a" filter="url(#wb2)"/>
<circle cx="653.7" cy="128" r="2.5" fill="#111" filter="url(#wb2)"/>
<g stroke="#fff" stroke-width="1" fill="none" shape-rendering="crispEdges"><path d="M662.5 109v150M588 184.5h150"/><rect x="625.5" y="146.5" width="75" height="75"/></g>
</svg>
<span class="t" style="left:617.0px;top:294px;">Cross Section X</span>
<svg style="left:588px;top:312px" width="150" height="150" viewBox="588 312 150 150">
<rect x="588" y="312" width="150" height="150" fill="#000"/>
<path d="M588.5 312.5H737.5V461.5H588.5ZM594.5 461.5v-2M594.5 312.5v2M600.5 461.5v-2M600.5 312.5v2M606.5 461.5v-2M606.5 312.5v2M612.5 461.5v-2M612.5 312.5v2M618.5 461.5v-4M618.5 312.5v4M624.5 461.5v-2M624.5 312.5v2M630.5 461.5v-2M630.5 312.5v2M636.5 461.5v-2M636.5 312.5v2M642.5 461.5v-2M642.5 312.5v2M648.5 461.5v-4M648.5 312.5v4M654.5 461.5v-2M654.5 312.5v2M660.5 461.5v-2M660.5 312.5v2M666.5 461.5v-2M666.5 312.5v2M672.5 461.5v-2M672.5 312.5v2M678.5 461.5v-4M678.5 312.5v4M684.5 461.5v-2M684.5 312.5v2M690.5 461.5v-2M690.5 312.5v2M696.5 461.5v-2M696.5 312.5v2M702.5 461.5v-2M702.5 312.5v2M708.5 461.5v-4M708.5 312.5v4M714.5 461.5v-2M714.5 312.5v2M720.5 461.5v-2M720.5 312.5v2M726.5 461.5v-2M726.5 312.5v2M732.5 461.5v-2M732.5 312.5v2M588.5 456.8h2M737.5 456.8h-2M588.5 452.0h2M737.5 452.0h-2M588.5 447.2h2M737.5 447.2h-2M588.5 442.5h2M737.5 442.5h-2M588.5 437.8h4M737.5 437.8h-4M588.5 433.0h2M737.5 433.0h-2M588.5 428.2h2M737.5 428.2h-2M588.5 423.5h2M737.5 423.5h-2M588.5 418.8h2M737.5 418.8h-2M588.5 414.0h4M737.5 414.0h-4M588.5 409.2h2M737.5 409.2h-2M588.5 404.5h2M737.5 404.5h-2M588.5 399.8h2M737.5 399.8h-2M588.5 395.0h2M737.5 395.0h-2M588.5 390.2h4M737.5 390.2h-4M588.5 385.5h2M737.5 385.5h-2M588.5 380.8h2M737.5 380.8h-2M588.5 376.0h2M737.5 376.0h-2M588.5 371.2h2M737.5 371.2h-2M588.5 366.5h4M737.5 366.5h-4M588.5 361.8h2M737.5 361.8h-2M588.5 357.0h2M737.5 357.0h-2M588.5 352.2h2M737.5 352.2h-2M588.5 347.5h2M737.5 347.5h-2M588.5 342.8h4M737.5 342.8h-4M588.5 338.0h2M737.5 338.0h-2M588.5 333.2h2M737.5 333.2h-2M588.5 328.5h2M737.5 328.5h-2M588.5 323.8h2M737.5 323.8h-2M588.5 319.0h4M737.5 319.0h-4M588.5 314.2h2M737.5 314.2h-2" stroke="#fff" stroke-width="1" fill="none" shape-rendering="crispEdges"/>
<path d="M588.0 454.9 L590.0 455.7 L592.0 456.1 L594.0 457.1 L596.0 455.7 L598.0 457.0 L600.0 450.7 L602.0 455.8 L604.0 459.1 L606.0 457.0 L608.0 458.8 L610.0 453.3 L612.0 455.8 L614.0 454.2 L616.0 456.3 L618.0 456.5 L620.0 452.6 L622.0 454.0 L624.0 454.5 L626.0 458.9 L628.0 457.9 L630.0 453.6 L632.0 458.1 L634.0 453.5 L636.0 456.8 L638.0 453.4 L640.0 450.5 L642.0 456.6 L644.0 452.0 L646.0 452.0 L648.0 457.4 L650.0 456.6 L653.6 448.5 L656.0 437.0 L658.6 414.8 L659.9 392.3 L661.0 370.0 L662.4 342.4 L663.2 318.0 L664.0 312.5 L665.6 322.4 L666.9 345.0 L667.9 372.4 L668.6 399.8 L669.9 424.8 L671.6 444.8 L673.0 451.7 L675.0 453.7 L677.0 457.8 L679.0 455.2 L681.0 456.1 L683.0 453.2 L685.0 457.6 L687.0 456.1 L689.0 457.8 L691.0 457.4 L693.0 453.8 L695.0 454.2 L697.0 453.0 L699.0 452.9 L701.0 452.4 L703.0 453.8 L705.0 455.6 L707.0 452.0 L709.0 456.1 L711.0 454.0 L713.0 453.9 L715.0 456.9 L717.0 454.9 L719.0 453.9 L721.0 454.9 L723.0 456.2 L725.0 452.3 L727.0 457.9 L729.0 452.1 L731.0 456.5 L733.0 457.1 L735.0 452.1 L737.0 456.7" stroke="#fff" stroke-width="1" fill="none" shape-rendering="crispEdges"/>
</svg>
<span class="t" style="left:617.0px;top:487px;">Cross Section Y</span>
<svg style="left:588px;top:505px" width="150" height="150" viewBox="588 505 150 150">
<rect x="588" y="505" width="150" height="150" fill="#000"/>
<path d="M588.5 505.5H737.5V654.5H588.5ZM594.5 654.5v-2M594.5 505.5v2M600.5 654.5v-2M600.5 505.5v2M606.5 654.5v-2M606.5 505.5v2M612.5 654.5v-2M612.5 505.5v2M618.5 654.5v-4M618.5 505.5v4M624.5 654.5v-2M624.5 505.5v2M630.5 654.5v-2M630.5 505.5v2M636.5 654.5v-2M636.5 505.5v2M642.5 654.5v-2M642.5 505.5v2M648.5 654.5v-4M648.5 505.5v4M654.5 654.5v-2M654.5 505.5v2M660.5 654.5v-2M660.5 505.5v2M666.5 654.5v-2M666.5 505.5v2M672.5 654.5v-2M672.5 505.5v2M678.5 654.5v-4M678.5 505.5v4M684.5 654.5v-2M684.5 505.5v2M690.5 654.5v-2M690.5 505.5v2M696.5 654.5v-2M696.5 505.5v2M702.5 654.5v-2M702.5 505.5v2M708.5 654.5v-4M708.5 505.5v4M714.5 654.5v-2M714.5 505.5v2M720.5 654.5v-2M720.5 505.5v2M726.5 654.5v-2M726.5 505.5v2M732.5 654.5v-2M732.5 505.5v2M588.5 649.8h2M737.5 649.8h-2M588.5 645.0h2M737.5 645.0h-2M588.5 640.2h2M737.5 640.2h-2M588.5 635.5h2M737.5 635.5h-2M588.5 630.8h4M737.5 630.8h-4M588.5 626.0h2M737.5 626.0h-2M588.5 621.2h2M737.5 621.2h-2M588.5 616.5h2M737.5 616.5h-2M588.5 611.8h2M737.5 611.8h-2M588.5 607.0h4M737.5 607.0h-4M588.5 602.2h2M737.5 602.2h-2M588.5 597.5h2M737.5 597.5h-2M588.5 592.8h2M737.5 592.8h-2M588.5 588.0h2M737.5 588.0h-2M588.5 583.2h4M737.5 583.2h-4M588.5 578.5h2M737.5 578.5h-2M588.5 573.8h2M737.5 573.8h-2M588.5 569.0h2M737.5 569.0h-2M588.5 564.2h2M737.5 564.2h-2M588.5 559.5h4M737.5 559.5h-4M588.5 554.8h2M737.5 554.8h-2M588.5 550.0h2M737.5 550.0h-2M588.5 545.2h2M737.5 545.2h-2M588.5 540.5h2M737.5 540.5h-2M588.5 535.8h4M737.5 535.8h-4M588.5 531.0h2M737.5 531.0h-2M588.5 526.2h2M737.5 526.2h-2M588.5 521.5h2M737.5 521.5h-2M588.5 516.8h2M737.5 516.8h-2M588.5 512.0h4M737.5 512.0h-4M588.5 507.2h2M737.5 507.2h-2" stroke="#fff" stroke-width="1" fill="none" shape-rendering="crispEdges"/>
<path d="M588.0 653.6 L646.0 653.4 L650.0 652.7 L652.4 647.7 L654.4 637.8 L656.1 617.8 L657.4 590.3 L658.1 560.4 L659.1 528.0 L659.6 505.5 L661.4 505.5 L661.9 528.0 L663.1 577.9 L664.4 607.8 L666.1 635.3 L667.9 647.7 L670.4 652.2 L675.0 653.4 L738.0 653.6" stroke="#fff" stroke-width="1" fill="none" shape-rendering="crispEdges"/>
</svg>
<span class="t" style="left:816.0px;top:91px;">FWHM X / FWHM Y</span>
<div style="left:765px;top:109px;width:200px;height:150px;background:#000;"></div>
<span class="t" style="left:813.0px;top:294px;">delta X / delta Y</span>
<div style="left:765px;top:312px;width:200px;height:150px;background:#000;"></div>
<span class="t" style="left:852.0px;top:487px;">Flux</span>
<div style="left:765px;top:505px;width:200px;height:150px;background:#000;"></div>
</body></html>
